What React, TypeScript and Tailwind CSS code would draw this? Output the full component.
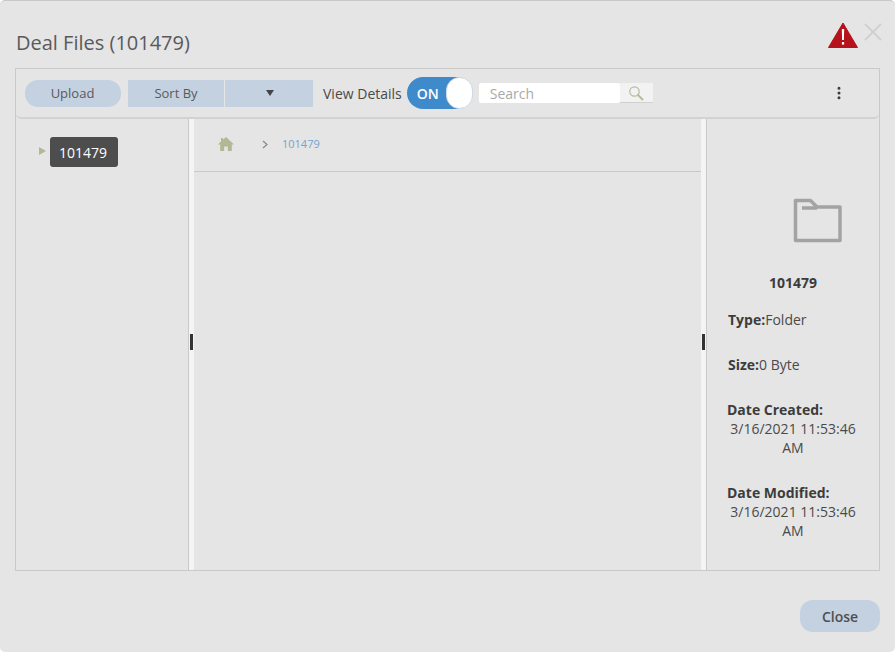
import { MoreVertical, X } from "lucide-react";

const font = "[font-family:'Open_Sans',sans-serif]";

function DetailRow({ label, value }: { label: string; value: string }) {
	return (
		<div className="text-[14px] leading-[19px] text-[#4a4a4a]">
			<span className="font-bold text-[#3c3c3c]">{label}</span>
			{value}
		</div>
	);
}

function DateRow({ label, value }: { label: string; value: string }) {
	return (
		<div className="text-[14px] leading-[19px] text-[#4a4a4a]">
			<div className="font-bold text-[#3c3c3c]">{label}</div>
			<div className="text-center">{value}</div>
		</div>
	);
}

function Splitter() {
	return (
		<div className="flex w-[5px] shrink-0 items-center justify-center bg-[#f4f4f4] pb-[6px]">
			<div className="h-4 w-[3px] bg-[#333333]" />
		</div>
	);
}

export default function App() {
	return (
		<div className={`relative flex h-[652px] w-[895px] flex-col overflow-hidden rounded-[5px] border-t border-[#c8c8c8] bg-[#e5e5e5] ${font}`}>
			{/* bits of the page behind the dialog */}
			<div className="absolute -top-px left-[828px] h-px w-[7px] bg-[#b5121b]" />
			<div className="absolute -top-px left-[859px] h-px w-[30px] bg-[#777777]" />

			{/* Header */}
			<div className="flex h-[67px] shrink-0 items-start justify-between pr-[14px] pl-[16px]">
				<h1 className="mt-[28px] text-[20px] leading-[27px] font-normal text-[#5a5a5a]">Deal Files (101479)</h1>
				<div className="mt-[21px] flex items-start">
					<svg width="30" height="26" viewBox="0 0 30 26">
						<path d="M15 1 L29.5 25.5 H0.5 Z" fill="#b5121b" stroke="#b5121b" strokeLinejoin="round" />
						<path d="M13.8 7 H16.2 L15.9 18 H14.1 Z" fill="#ffffff" />
						<rect x="13.9" y="20" width="2.2" height="2.6" fill="#ffffff" />
					</svg>
					<X className="-mt-[5px] -mr-[7px] size-[30px] text-[#d0d0d0]" strokeWidth={1.5} />
				</div>
			</div>

			{/* Panel */}
			<div className="mx-[15px] flex h-[503px] shrink-0 flex-col border border-[#c9c9c9]">
				{/* Toolbar */}
				<div className="flex h-[50px] shrink-0 items-center rounded-b-[5px] border-b-2 border-[#d2d2d2] pl-[9px]">
					<button className="h-[27px] w-[96px] rounded-[13px] bg-[#c3d1e1] pt-[2px] pr-[1px] text-[13px] text-[#5a5a5a]">Upload</button>
					<button className="ml-[7px] h-[27px] w-[96px] bg-[#c3d1e1] pt-[2px] text-[13px] text-[#5a5a5a]">Sort By</button>
					<div className="ml-px flex h-[27px] w-[88px] items-center justify-center bg-[#c3d1e1] pl-[2px]">
						<div className="h-0 w-0 border-x-[4px] border-t-[6px] border-x-transparent border-t-[#444444]" />
					</div>
					<span className="ml-[10px] text-[14px] text-[#4a4a4a]">View Details</span>
					<div className="relative ml-[5px] flex h-[32px] w-[66px] items-center rounded-full bg-[#3f8acb] pl-[10px] text-[14px] font-semibold text-white">
						ON
						<div className="absolute top-0 right-0 h-[32px] w-[27px] rounded-full border border-[#cfdcea] bg-white" />
					</div>
					<div className="ml-[6px] flex h-[20px] w-[175px] items-center">
						<div className="flex h-full w-[141px] items-center rounded-[2px] bg-white pl-[11px] text-[14px] text-[#a9a9a9]">Search</div>
						<div className="flex h-full w-[33px] items-center justify-center border-b border-[#d0d0d0] bg-[#f2f2f2]">
							<svg width="16" height="16" viewBox="0 0 16 16">
								<circle cx="6.5" cy="6.5" r="4.7" fill="none" stroke="#b5bc9c" strokeWidth="1.2" />
								<path d="M10 10 L14.5 14.5" stroke="#b5bc9c" strokeWidth="2" strokeLinecap="round" />
							</svg>
						</div>
					</div>
					<MoreVertical className="ml-[177px] size-[16px] text-[#3c3c3c]" strokeWidth={2.5} />
				</div>

				{/* Body */}
				<div className="flex min-h-0 flex-1">
					<div className="flex w-[173px] shrink-0 items-start border-r border-[#c9c9c9] pt-[18px] pl-[23px]">
						<div className="mt-[10px] h-0 w-0 border-y-[4px] border-l-[7px] border-y-transparent border-l-[#b0b894]" />
						<div className="ml-[4px] flex h-[30px] w-[68px] items-center justify-center rounded-[3px] bg-[#4d4d4d] pr-[2px] text-[14px] text-white">101479</div>
					</div>
					<Splitter />
					<div className="flex w-[507px] shrink-0 flex-col">
						<div className="flex h-[53px] shrink-0 items-center border-b border-[#c9c9c9] pb-[2px] pl-[24px]">
							<svg width="16" height="14" viewBox="0 0 16 14">
								<path d="M8 0 L16 7.5 H13.8 V14 H9.8 V9.5 H6.2 V14 H2.2 V7.5 H0 L3 4.6 V1 H5 V2.8 Z" fill="#b0b894" />
							</svg>
							<svg className="ml-[28px]" width="6" height="9" viewBox="0 0 6 9">
								<path d="M1 1 L5 4.5 L1 8" fill="none" stroke="#888888" strokeWidth="1.2" />
							</svg>
							<span className="ml-[14px] text-[11px] text-[#74a3d1]">101479</span>
						</div>
					</div>
					<Splitter />
					<div className="flex min-w-0 flex-1 flex-col border-l border-[#c9c9c9] pl-[20px]">
						<div className="mt-[78px] flex justify-center pl-[29px]">
							<svg width="50" height="46" viewBox="0 0 50 46">
								<path d="M2.5 3.5 H17.5 L24 10 H47 V43.5 H2.5 Z M9 11 H24" fill="none" stroke="#a3a3a3" strokeWidth="3.5" strokeLinejoin="round" />
							</svg>
						</div>
						<div className="mt-[30px] pr-[20px] text-center text-[14px] leading-[19px] font-bold text-[#3c3c3c]">101479</div>
						<div className="mt-[18px] pr-[20px] pl-px"><DetailRow label="Type:" value="Folder" /></div>
						<div className="mt-[26px] pr-[20px] pl-px"><DetailRow label="Size:" value="0 Byte" /></div>
						<div className="mt-[26px] pr-[20px]"><DateRow label="Date Created:" value="3/16/2021 11:53:46 AM" /></div>
						<div className="mt-[26px] pr-[20px]"><DateRow label="Date Modified:" value="3/16/2021 11:53:46 AM" /></div>
					</div>
				</div>
			</div>

			{/* Footer */}
			<div className="flex justify-end px-[15px] pt-[29px]">
				<button className="h-[32px] w-[80px] rounded-[13px] bg-[#c3d1e1] text-[14px] font-semibold text-[#4f4f4f]">Close</button>
			</div>
		</div>
	);
}
